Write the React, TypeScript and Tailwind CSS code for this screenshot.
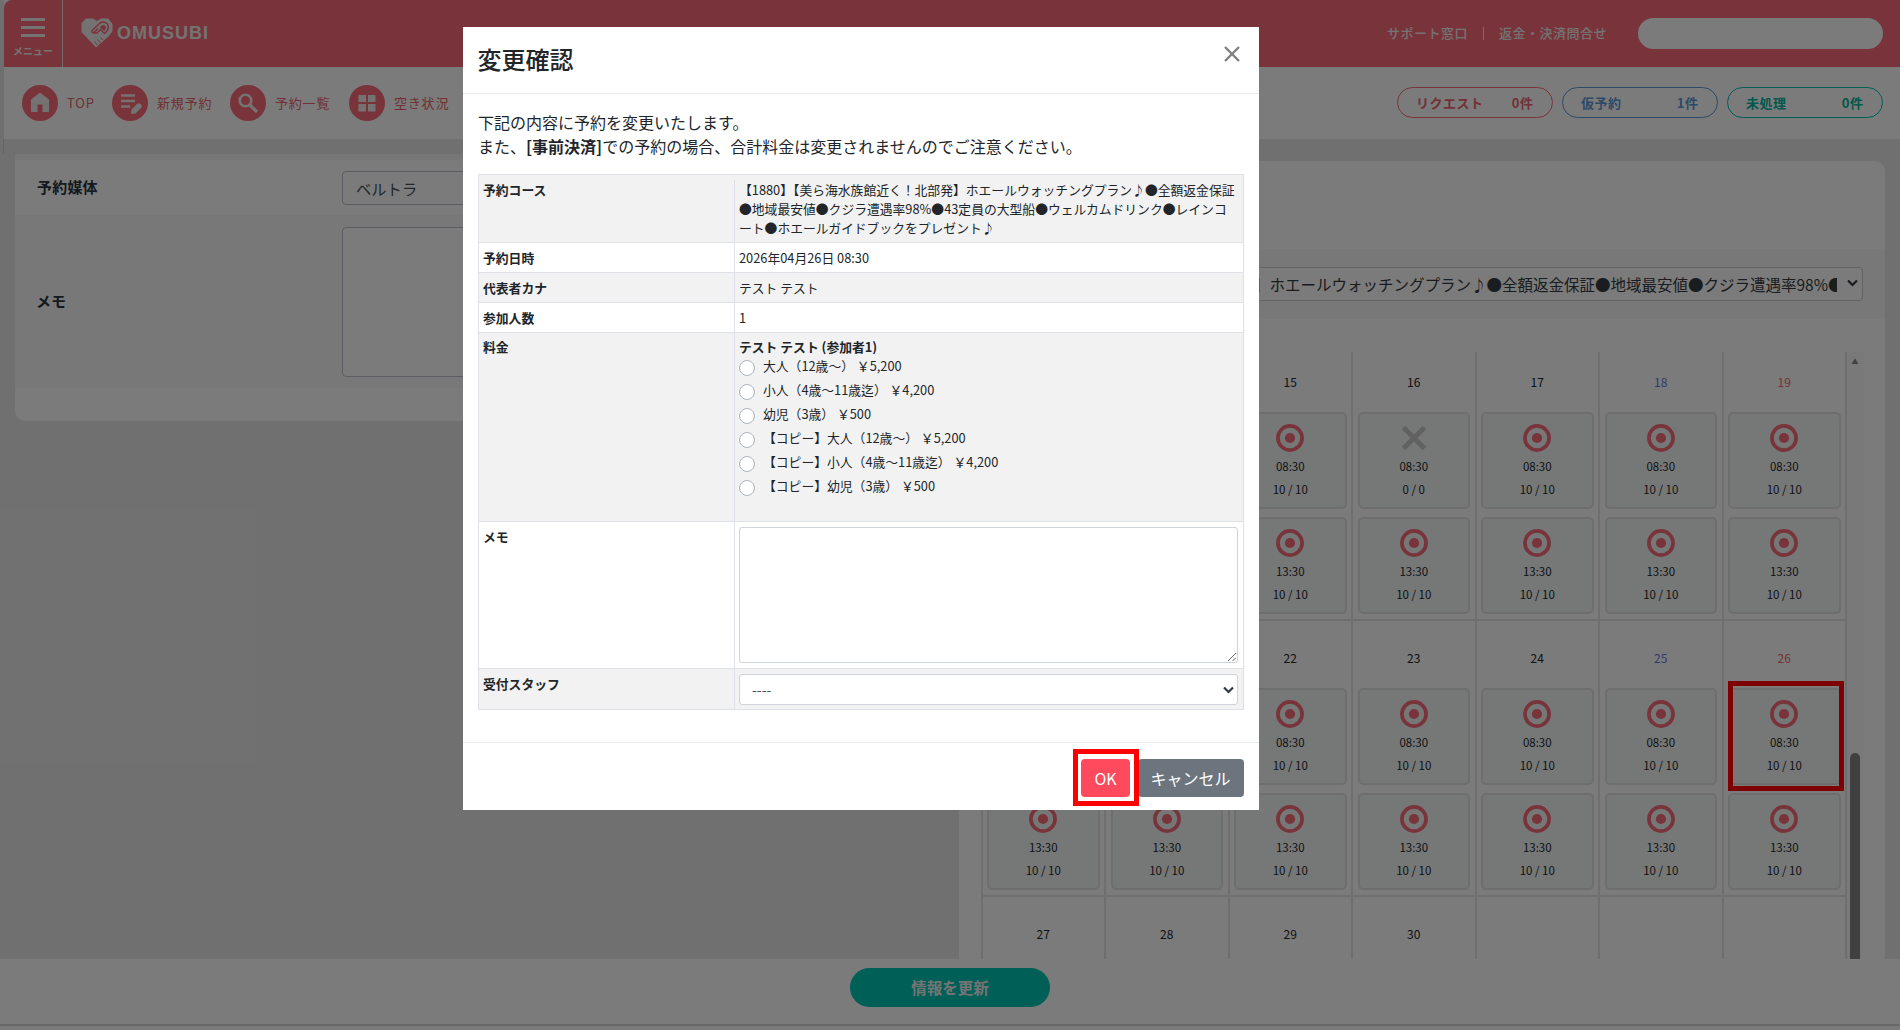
import React from "react";

const Target = () => (
  <svg width="28" height="28" viewBox="0 0 28 28" className="block">
    <circle cx="14" cy="14" r="12.100" fill="none" stroke="#f26876" strokeWidth="3.700" />
    <circle cx="14" cy="14" r="5.100" fill="#f26876" />
  </svg>
);

const Cross = () => (
  <svg width="28" height="28" viewBox="0 0 28 28" className="block">
    <path d="M3.500 3.500L24.500 24.500M24.500 3.500L3.500 24.500" stroke="#c2c2c2" strokeWidth="5" />
  </svg>
);

function Slot({ time, full, marked }: { time: string; full?: boolean; marked?: boolean }) {
  return (
    <div className="relative mr-[4.5px] ml-[4.5px] flex h-[97px] flex-col items-center rounded-[5px] border-2 border-[#dcdcdc] bg-[#ecefee] pt-[10px] text-[11.5px] text-[#212529]">
      {full ? <Cross /> : <Target />}
      <span className="mt-[3px] leading-[22px]">{time}</span>
      <span className="leading-[24px]">{full ? "0 / 0" : "10 / 10"}</span>
      {marked && <div className="absolute -top-[9px] -left-[2px] h-[110px] w-[116px] border-[5.5px] border-[#ff0000]" />}
    </div>
  );
}

function Day({ day, col }: { day?: number; col: number }) {
  const color = col === 5 ? "text-[#6a6fe0]" : col === 6 ? "text-[#e8666c]" : "text-[#212529]";
  return (
    <div className="border-r-2 border-b-2 border-[#dedede]">
      <div className={`h-[66.5px] pt-[26.5px] text-center text-[12px] leading-[20px] ${color}`}>{day}</div>
      {day !== undefined && day < 27 && (
        <div className="flex flex-col gap-[8.5px]">
          <Slot time="08:30" full={day === 16} marked={day === 26} />
          <Slot time="13:30" />
        </div>
      )}
    </div>
  );
}

const weeks: (number | undefined)[][] = [
  [13, 14, 15, 16, 17, 18, 19],
  [20, 21, 22, 23, 24, 25, 26],
  [27, 28, 29, 30, undefined, undefined, undefined],
];

function NavItem({ label, className, children }: { label: string; className: string; children: React.ReactNode }) {
  return (
    <div className={`flex shrink-0 items-center ${className}`}>
      <svg width="36" height="36" viewBox="0 0 36 36" className="shrink-0">
        <circle cx="18" cy="18" r="18" fill="#f26876" />
        {children}
      </svg>
      <span className="ml-[9px] text-[13px] tracking-[0.8px] whitespace-nowrap text-[#e0606c]">{label}</span>
    </div>
  );
}

function Pill({ label, count, className }: { label: string; count: string; className: string }) {
  return (
    <div className={`flex h-[31px] w-[156px] items-center justify-between rounded-full border pr-[18.5px] pl-[18px] text-[13px] font-bold tracking-[0.5px] ${className}`}>
      <span>{label}</span>
      <span>{count}</span>
    </div>
  );
}

const Chevron = () => (
  <svg width="11" height="8" viewBox="0 0 11 8" className="shrink-0">
    <path d="M1 1.500L5.500 6L10 1.500" fill="none" stroke="#343a40" strokeWidth="2.200" />
  </svg>
);

function Row({ label, className, children }: { label: string; className: string; children: React.ReactNode }) {
  return (
    <div className={`flex border-b border-[#dee2e6] ${className}`}>
      <div className="w-[256px] shrink-0 border-r border-[#dee2e6] px-[4px] font-bold">{label}</div>
      <div className="w-[508px] px-[4px]">{children}</div>
    </div>
  );
}

const fees = [
  "大人（12歳〜） ￥5,200",
  "小人（4歳〜11歳迄） ￥4,200",
  "幼児（3歳） ￥500",
  "【コピー】大人（12歳〜） ￥5,200",
  "【コピー】小人（4歳〜11歳迄） ￥4,200",
  "【コピー】幼児（3歳） ￥500",
];

function Modal() {
  return (
    <div className="absolute top-[27px] left-[463px] flex h-[783px] w-[796px] flex-col bg-white text-[#212529]">
      <div className="flex h-[67px] shrink-0 justify-between border-b border-[#e9ecef] pl-[14.5px]">
        <h5 className="pt-[14px] text-[24px] leading-[36px] font-medium">変更確認</h5>
        <svg width="16" height="16" viewBox="0 0 16 16" className="mt-[19px] mr-[19.5px]">
          <path d="M1 1L15 15M15 1L1 15" stroke="#7f7f7f" strokeWidth="2.400" />
        </svg>
      </div>
      <div className="px-[15px] pt-[16px]">
        <p className="h-[64px] text-[16px] leading-[24px]">
          下記の内容に予約を変更いたします。
          <br />
          また、<b>[事前決済]</b>での予約の場合、合計料金は変更されませんのでご注意ください。
        </p>
        <div className="w-[766px] border-x border-t border-[#dee2e6] text-[12.8px] leading-[19px]">
          <Row label="予約コース" className="h-[68px] bg-[#f2f2f2] pt-[5px]">
            <p className="w-[499px]">
              【1880】【美ら海水族館近く！北部発】ホエールウォッチングプラン♪●全額返金保証●地域最安値●クジラ遭遇率98%●43定員の大型船●ウェルカムドリンク●レインコート●ホエールガイドブックをプレゼント♪
            </p>
          </Row>
          <Row label="予約日時" className="h-[30px] *:pt-[5px]">2026年04月26日 08:30</Row>
          <Row label="代表者カナ" className="h-[30px] bg-[#f2f2f2] *:pt-[5px]">テスト テスト</Row>
          <Row label="参加人数" className="h-[30px] *:pt-[5px]">1</Row>
          <Row label="料金" className="h-[189px] bg-[#f2f2f2] *:pt-[4px]">
            <b className="block h-[19px]">テスト テスト (参加者1)</b>
            {fees.map((f) => (
              <div key={f} className="flex h-[24px]">
                <span className="mt-[4px] size-[16px] shrink-0 rounded-full border border-[#adb5bd] bg-white" />
                <span className="ml-[8px] whitespace-pre">{f}</span>
              </div>
            ))}
          </Row>
          <Row label="メモ" className="h-[147px] *:pt-[5px]">
            <div className="flex h-[136px] w-[499px] items-end justify-end rounded-[3px] border border-[#ced4da] bg-white p-px">
              <svg width="8" height="8" viewBox="0 0 8 8">
                <path d="M0 8L8 0M4.5 8L8 4.5" stroke="#555" strokeWidth="0.9" />
              </svg>
            </div>
          </Row>
          <Row label="受付スタッフ" className="h-[41px] bg-[#f2f2f2] *:pt-[5px]">
            <div className="flex h-[31px] w-[499px] items-center justify-between rounded-[3px] border border-[#ced4da] bg-white pr-[3px] pl-[12px] text-[14px] text-[#495057]">
              <span>----</span>
              <Chevron />
            </div>
          </Row>
        </div>
      </div>
      <div className="mt-auto flex h-[68px] shrink-0 items-start justify-end border-t border-[#e9ecef] pt-[16px] pr-[15px] text-[16px] text-white">
        <div className="relative flex h-[38px] w-[49px] items-center justify-center rounded-[4px] bg-[#ff4a5d]">
          OK
          <div className="absolute -top-[10px] -left-[8px] z-10 h-[57px] w-[66px] border-[5px] border-[#ff0000]" />
        </div>
        <div className="ml-[8px] flex h-[38px] w-[106px] items-center justify-center rounded-[4px] bg-[#6c757d] pr-[1px]">キャンセル</div>
      </div>
    </div>
  );
}

export default function App() {
  return (
    <div className="relative flex h-[1030px] w-[1900px] flex-col overflow-hidden bg-[#e1e1e1] font-['Noto_Sans_CJK_JP',sans-serif]">
      <div className="flex h-[139px] shrink-0 flex-col border-l-4 border-[#dedede] bg-[#f6f6f6]">
        <header className="flex h-[67px] shrink-0 items-center rounded-tl-[8px] bg-[#f26876] text-[#eae4e4]">
          <div className="flex h-full w-[59px] flex-col items-center border-r border-[#e6dede] pt-[18px]">
            <div className="flex w-[24px] flex-col gap-[5px]">
              <span className="h-[3px] bg-[#eae4e4]" />
              <span className="h-[3px] bg-[#eae4e4]" />
              <span className="h-[3px] bg-[#eae4e4]" />
            </div>
            <span className="mt-[6px] text-[10px] leading-[15px] font-bold">メニュー</span>
          </div>
          <svg width="32" height="30" viewBox="0 0 32 30" className="-mt-[2px] ml-[18px] shrink-0">
            <path d="M5 0.500H12L16 3L20 0.500H27L31.500 6V13L28 18L15 29.500L0.500 14V5Z" fill="#eae4e4" />
            <path d="M17 10.500L12.500 15Q10.500 14.500 11 12.500L19 5Q23 2.500 26.500 6Q28.500 10 25.500 13.500L23.500 15.500L19.500 11.500L16 15L12.500 15" fill="none" stroke="#f26876" strokeWidth="1.500" strokeLinejoin="round" />
            <path d="M18.500 9.500L21 7.300Q23 6.300 24.500 8Q25.500 10 24 12L23.300 12.800Z" fill="#f26876" />
            <path d="M13.500 23.500L16.500 27M16.500 21.500L19.500 25M19.500 19.500L22.500 22.500" stroke="#f26876" strokeWidth="1" />
          </svg>
          <span className="-mt-[1px] ml-[4px] font-['Liberation_Sans',sans-serif] text-[18px] font-bold tracking-[1px]">OMUSUBI</span>
          <div className="-mt-[1px] ml-auto flex items-center pr-[17px] text-[13px] font-medium tracking-[0.5px]">
            <span className="-mt-[1px]">サポート窓口</span>
            <span className="mx-[15px] h-[13px] w-px bg-[#e6dede]" />
            <span className="-mt-[1px]">返金・決済問合せ</span>
            <div className="ml-[31px] h-[31px] w-[245px] rounded-full bg-[#f6f6f6]" />
          </div>
        </header>
        <nav className="flex h-[72px] shrink-0 items-center pl-[18px]">
          <NavItem label="TOP" className="w-[90px]">
            <path d="M9 27V14.500L18 7.500L27 14.500V27H20.500V19.500H15.500V27Z" fill="#eae4e4" />
          </NavItem>
          <NavItem label="新規予約" className="w-[118px]">
            <path d="M9 10.500H23M9 16H23M9 21.500H18" stroke="#eae4e4" strokeWidth="2.400" />
            <path d="M19 29L19.500 24.500L25.500 18.500Q27 17.500 29 19.500Q31 21 29.500 22.500L23.500 28.500Z" fill="#eae4e4" />
          </NavItem>
          <NavItem label="予約一覧" className="w-[119px]">
            <circle cx="15.500" cy="15.500" r="5.800" fill="none" stroke="#eae4e4" strokeWidth="2.600" />
            <path d="M19.500 19.500L27 27" stroke="#eae4e4" strokeWidth="3.200" />
          </NavItem>
          <NavItem label="空き状況" className="w-[118px]">
            <path d="M9.500 10H17V17H9.500ZM19 10H26.500V17H19ZM9.500 19H17V26.500H9.500ZM19 19H26.500V26.500H19Z" fill="#eae4e4" />
          </NavItem>
          <div className="-mt-[1px] ml-auto flex gap-[9px] pr-[17px]">
            <Pill label="リクエスト" count="0件" className="border-[#f26876] text-[#e8606c]" />
            <Pill label="仮予約" count="1件" className="border-[#5a94d0] text-[#5a94d0]" />
            <Pill label="未処理" count="0件" className="border-[#00beac] text-[#00b09c]" />
          </div>
        </nav>
      </div>

      <main className="flex h-[820px] shrink-0 items-start justify-between overflow-hidden pr-[15px]">
        <div className="h-[15px] w-[4px] shrink-0 border-r border-[#c8c8c8]" />
        <section className="mt-[15px] mr-auto ml-[11px] w-[920px] overflow-hidden rounded-b-[10px] bg-[#f6f6f6] text-[15px] text-[#2c333d]">
          <div className="h-[6px] bg-[#efefef]" />
          <div className="flex h-[55px] items-center pl-[22px]">
            <span className="w-[305px] font-bold tracking-[0.2px]">予約媒体</span>
            <div className="flex h-[34px] w-[500px] items-center rounded-[4px] border border-[#b9bdc6] pt-[2px] pl-[13px] text-[15.3px] text-[#495057]">ベルトラ</div>
          </div>
          <div className="flex h-[173px] items-center bg-[#f0f0f0] pl-[21px]">
            <span className="w-[306px] font-bold">メモ</span>
            <div className="h-[150px] w-[500px] rounded-[4px] border border-[#b9bdc6] bg-[#f6f6f6]" />
          </div>
          <div className="h-[33px]" />
        </section>

        <section className="mt-[22px] flex h-[798px] w-[926px] flex-col overflow-hidden rounded-t-[10px] bg-[#f6f6f6]">
          <div className="h-[88px] shrink-0" />
          <div className="flex h-[70px] shrink-0 items-center bg-[#f0f0f0] pr-[22px] pl-[22px]">
            <div className="flex h-[34px] w-full items-center rounded-[4px] border border-[#c4c6ca] bg-[#f6f6f6] pt-[2px] pr-[4px] text-[#343a40]">
              <div className="flex flex-1 justify-start overflow-hidden pl-[272px]">
                <span className="text-[15.5px] whitespace-nowrap">】ホエールウォッチングプラン♪●全額返金保証●地域最安値●クジラ遭遇率98%●43定員</span>
              </div>
              <span className="w-[10px] shrink-0" />
              <div className="-mt-[4px] shrink-0">
                <Chevron />
              </div>
            </div>
          </div>
          <div className="mt-[33px] flex h-[607px] overflow-hidden pl-[21.5px]">
            <div className="-mt-[7px] w-[866.5px] border-l-2 border-[#dedede]">
              {weeks.map((week, i) => (
                <div key={i} className="grid h-[276px] grid-cols-7">
                  {week.map((d, c) => (
                    <Day key={c} day={d} col={c} />
                  ))}
                </div>
              ))}
            </div>
            <div className="flex w-[16px] flex-col items-center bg-[#f2f2f2] pt-[6px]">
              <svg width="10" height="9" viewBox="0 0 10 9">
                <path d="M5 0.500L10 9H0Z" fill="#808080" />
              </svg>
              <div className="mt-[389px] h-[300px] w-[10px] rounded-t-full bg-[#808080]" />
            </div>
          </div>
        </section>
      </main>

      <footer className="flex h-[71px] shrink-0 flex-col items-center bg-[#f6f6f6] pt-[9px]">
        <div className="flex h-[39px] w-[200px] items-center justify-center rounded-full bg-[#00beac] text-[15.5px] font-bold text-[#e4eae8]">情報を更新</div>
        <div className="mt-[17px] h-[2px] w-full bg-[#d0d0d0]" />
      </footer>

      <div className="absolute inset-0 bg-black/50" />
      <Modal />
    </div>
  );
}
